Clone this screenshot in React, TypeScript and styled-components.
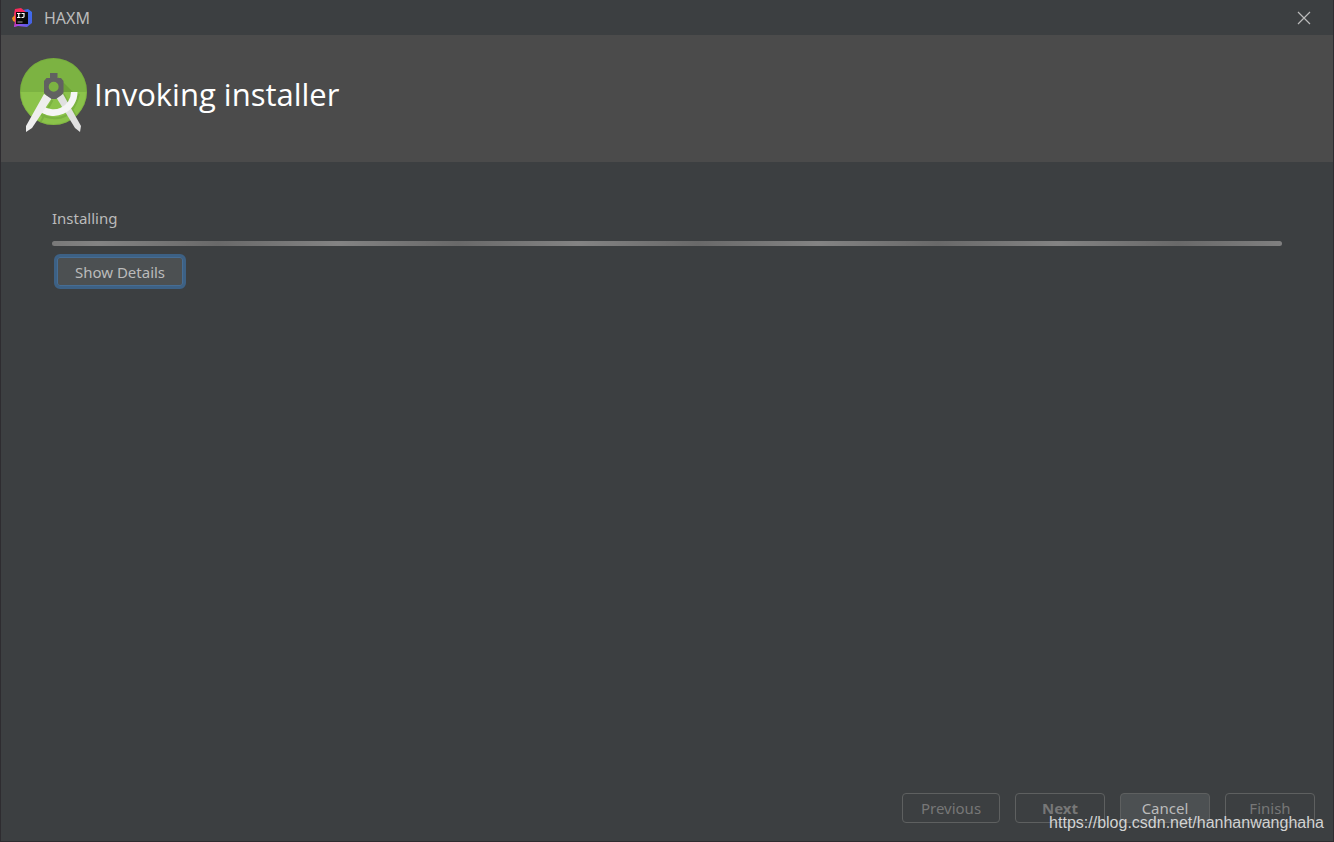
import React from "react";
import styled, { createGlobalStyle } from "styled-components";

const GlobalStyle = createGlobalStyle`
  *, *::before, *::after { box-sizing: border-box; }
  body { margin: 0; background: #3c3f41; }
`;

const Window = styled.div`
  position: relative;
  display: flex;
  flex-direction: column;
  min-height: 100vh;
  background: #3c3f41;
  border: solid #2e2c30;
  border-width: 0 1px 1px;
  color: #bbbbbb;
  font: 15px/20px "Noto Sans", "Open Sans", sans-serif;
`;

const TitleBar = styled.div`
  display: flex;
  align-items: center;
  height: 35px;
  padding: 0 20px 0 10px;
  gap: 11px;
`;

const WindowTitle = styled.span`
  flex: 1;
  font-size: 16px;
`;

const CloseButton = styled.button`
  display: flex;
  padding: 0;
  border: 0;
  background: none;
  color: #bbbbbb;
`;

const Banner = styled.header`
  display: flex;
  align-items: flex-start;
  height: 127px;
  padding: 22px 18px;
  gap: 5px;
  background: #4b4b4b;
`;

const Heading = styled.h1`
  margin: 0;
  padding-top: 16px;
  color: #ffffff;
  font-family: "Open Sans", "Noto Sans", sans-serif;
  font-size: 31px;
  line-height: 42px;
  font-weight: 400;
`;

const Content = styled.main`
  flex: 1;
  display: flex;
  flex-direction: column;
  align-items: flex-start;
  padding: 46px 51px;
`;

const Status = styled.div`
  margin-bottom: 13px;
`;

const ProgressTrack = styled.div`
  width: 100%;
  height: 5px;
  margin-bottom: 8px;
  border-radius: 3px;
  background: linear-gradient(90deg, #696969, #838383 50%, #696969) -74px 0 / 240px 100% repeat-x;
`;

const Button = styled.button<{ $primary?: boolean; $wide?: boolean }>`
  width: ${(p) => (p.$wide ? 98 : 90)}px;
  height: 30px;
  padding: 0;
  border: 1px solid #5e6060;
  border-radius: 4px;
  background: #4c5052;
  color: #bbbbbb;
  font: inherit;
  font-weight: ${(p) => (p.$primary ? 700 : 400)};

  &:disabled {
    background: transparent;
    color: #777777;
  }
`;

const FocusedButton = styled(Button)`
  width: 132px;
  height: 35px;
  margin-left: 2px;
  border: 3px solid #3d6185;
  border-radius: 6px;
  box-shadow: inset 0 0 0 1px #466d94;
`;

const Footer = styled.footer`
  display: flex;
  justify-content: flex-end;
  gap: 15px;
  padding: 0 18px 18px;
`;

const Watermark = styled.span`
  position: absolute;
  right: 9px;
  bottom: 8px;
  color: #d2d3d3;
  font: 16px/20px "Liberation Sans", Arial, sans-serif;
  pointer-events: none;
`;

function IdeaLogo() {
  return (
    <svg width="22" height="22" viewBox="0 0 22 22" aria-hidden="true">
      <defs>
        <linearGradient id="ideaBlue" x1="0" y1="1" x2="1" y2="0">
          <stop offset="0" stopColor="#b74af7" />
          <stop offset="0.5" stopColor="#4a5fe0" />
          <stop offset="1" stopColor="#3a6ff0" />
        </linearGradient>
        <linearGradient id="ideaRed" x1="0" y1="0" x2="0" y2="1">
          <stop offset="0" stopColor="#fe2857" />
          <stop offset="0.6" stopColor="#e2336f" />
          <stop offset="1" stopColor="#b03bd8" />
        </linearGradient>
      </defs>
      <path d="M12 3L17 2L21 5V16L16 20L7 19L3 20L5 14Z" fill="url(#ideaBlue)" />
      <path d="M4 2L10 1L15 5L8 17L3 20L4 13L3 7Z" fill="url(#ideaRed)" />
      <path d="M1 11L4 8V15L2 14Z" fill="#f58a20" />
      <path d="M5 5H17V17H5Z" fill="#080808" />
      <path
        d="M6 6.500H9.500M7.750 6V11M6 10.500H9.500M10.500 6.500H13.500M13 6V9.500Q13 10.600 10.500 10.500"
        fill="none"
        stroke="#ffffff"
        strokeWidth="1.200"
      />
      <path d="M6.500 15H11.500" stroke="#a0a0a0" strokeWidth="1" />
    </svg>
  );
}

function StudioLogo() {
  return (
    <svg width="70" height="78" viewBox="0 0 70 78" aria-hidden="true">
      <defs>
        <clipPath id="studioDisc">
          <circle cx="34.500" cy="34.500" r="33.500" />
        </clipPath>
      </defs>
      <g clipPath="url(#studioDisc)">
        <path d="M0 0H70V35H0Z" fill="#7cb342" />
        <path d="M0 35H70V70H0Z" fill="#8bc34a" />
        <path d="M39 20L54 35H40Z" fill="#5f9130" opacity=".55" />
        <path
          d="M27 40L33 44L20 68L13 74M39 42L45 38L62 68M22 58Q52 70 60 37"
          fill="none"
          stroke="#558b2f"
          strokeWidth="2"
          opacity=".3"
        />
      </g>
      <circle cx="34.500" cy="34.500" r="33" fill="none" stroke="#6ea034" strokeOpacity=".35" />
      <path d="M37 40L44 37L62 69L61 75L56 71Z" fill="#e0e0e0" />
      <path
        d="M52 35H58.500A23.800 23.800 0 0 1 19 53L23 48A17.500 17.500 0 0 0 52 35Z"
        fill="#f5f5f5"
      />
      <path d="M25 37L33 41L13 71L7 75V69Z" fill="#eeeeee" />
      <path
        fillRule="evenodd"
        d="M31 16H38.500V21H42L44.500 24V36L42 38.500L37 42H32.500L27.500 38.500L25 36V24L27.500 21H31ZM34.700 24.800A5 5 0 1 0 34.700 34.800A5 5 0 1 0 34.700 24.800Z"
        fill="#616161"
      />
    </svg>
  );
}

export default function App() {
  return (
    <>
      <GlobalStyle />
      <Window>
        <TitleBar>
          <IdeaLogo />
          <WindowTitle>HAXM</WindowTitle>
          <CloseButton type="button" aria-label="Close">
            <svg width="18" height="18" viewBox="0 0 18 18">
              <path d="M3 3L15 15M15 3L3 15" stroke="currentColor" strokeWidth="1.2" />
            </svg>
          </CloseButton>
        </TitleBar>
        <Banner>
          <StudioLogo />
          <Heading>Invoking installer</Heading>
        </Banner>
        <Content>
          <Status id="status">Installing</Status>
          <ProgressTrack role="progressbar" aria-labelledby="status" />
          <FocusedButton type="button">Show Details</FocusedButton>
        </Content>
        <Footer>
          <Button type="button" $wide disabled>Previous</Button>
          <Button type="button" $primary disabled>Next</Button>
          <Button type="button">Cancel</Button>
          <Button type="button" disabled>Finish</Button>
        </Footer>
        <Watermark>https://blog.csdn.net/hanhanwanghaha</Watermark>
      </Window>
    </>
  );
}
